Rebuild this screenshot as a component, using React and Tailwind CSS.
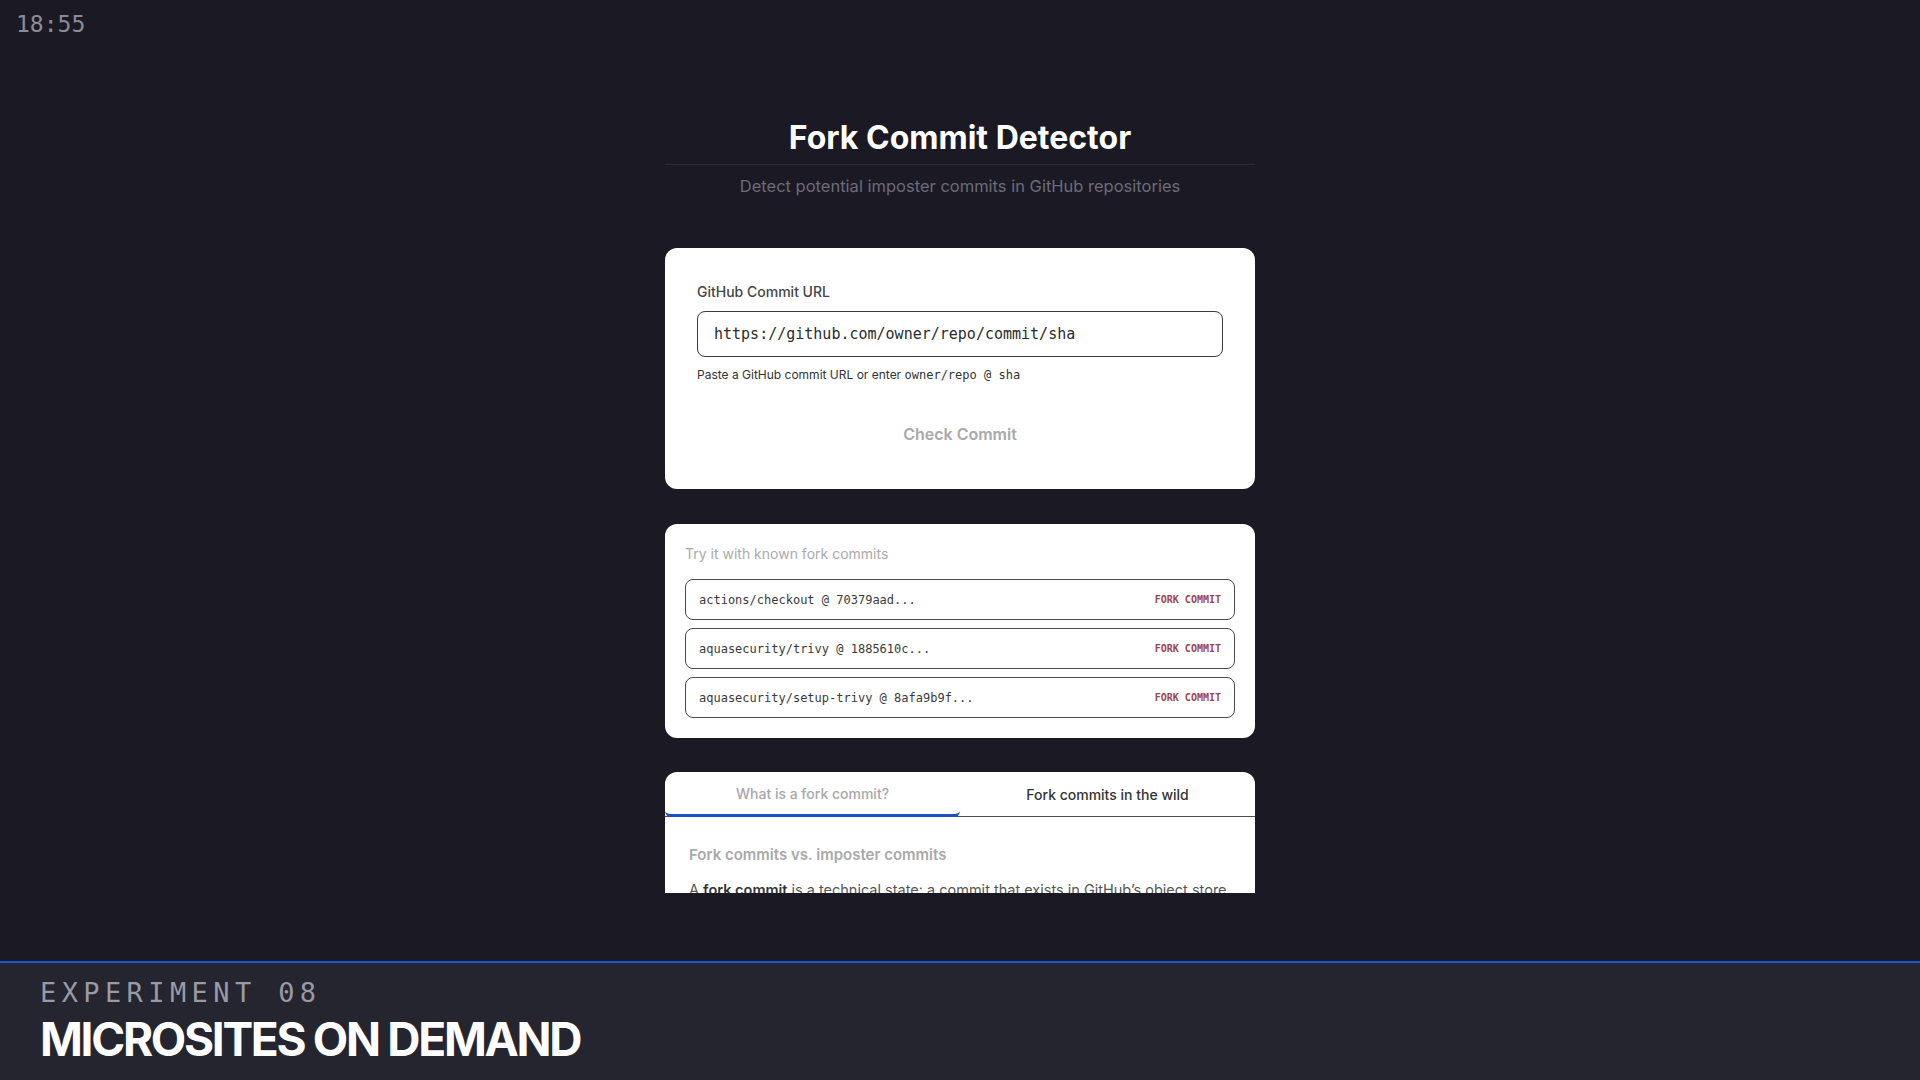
const SANS = { fontFamily: 'Inter, "Noto Sans", sans-serif' };

const samples = [
  'actions/checkout @ 70379aad...',
  'aquasecurity/trivy @ 1885610c...',
  'aquasecurity/setup-trivy @ 8afa9b9f...',
];

function SampleRow({ label }) {
  return (
    <div className="h-[41px] flex items-center justify-between px-[13px] rounded-lg border-[1.5px] border-[#4a4a4f] bg-white">
      <span className="font-['DejaVu_Sans_Mono',monospace] text-[12px] text-[#3a3a3a]">{label}</span>
      <span className="font-['DejaVu_Sans_Mono',monospace] text-[10px] font-bold text-[#9d4450]">
        FORK COMMIT
      </span>
    </div>
  );
}

export default function App() {
  return (
    <div className="relative w-[1920px] h-[1080px] bg-[#1b1a24] flex flex-col overflow-hidden" style={SANS}>
      {/* clock overlay */}
      <div className="absolute left-[16px] top-[9px] font-['DejaVu_Sans_Mono',monospace] text-[23px] leading-[30px] text-[#8b8b97]">
        18:55
      </div>

      {/* microsite viewport */}
      <div className="h-[893px] overflow-hidden flex flex-col items-center">
        <div className="w-[590px] pt-[120px]">
          <h1 className="text-[32px] leading-[36px] font-bold text-white text-center">
            Fork Commit Detector
          </h1>
          <div className="mt-[8px] h-px bg-[#2c2b37]" />
          <p className="mt-[9px] text-[16.5px] leading-[24px] text-[#6c6b78] text-center">
            Detect potential imposter commits in GitHub repositories
          </p>

          {/* input card */}
          <div className="mt-[50px] bg-white rounded-xl px-8 pt-[34px] pb-[31px]">
            <label className="block text-[14px] leading-[20px] font-medium text-[#454545] mb-[9px]">
              GitHub Commit URL
            </label>
            <div className="h-[46px] flex items-center px-[16px] rounded-lg border-[1.5px] border-[#3c3c40]">
              <span className="font-['DejaVu_Sans_Mono',monospace] text-[15px] text-[#2b2b2b]">
                https://github.com/owner/repo/commit/sha
              </span>
            </div>
            <p className="mt-[9px] text-[12px] leading-[18px] text-[#333]">
              Paste a GitHub commit URL or enter{' '}
              <span className="font-['DejaVu_Sans_Mono',monospace] text-[12px]">owner/repo @ sha</span>
            </p>
            <div className="mt-[26px] h-[48px] flex items-center justify-center text-[16px] font-semibold text-[#a9a9a9]">
              Check Commit
            </div>
          </div>

          {/* samples card */}
          <div className="mt-[35px] bg-white rounded-xl p-5">
            <p className="text-[14px] leading-[20px] text-[#ababab] mb-[15px]">Try it with known fork commits</p>
            <div className="flex flex-col gap-2">
              {samples.map(s => (
                <SampleRow key={s} label={s} />
              ))}
            </div>
          </div>

          {/* info tabs card */}
          <div className="mt-[34px] bg-white rounded-t-xl">
            <div className="flex h-[45px] border-b border-[#4d4d52]">
              <div className="flex-1 flex items-center justify-center rounded-b-md border-b-[3px] border-[#1e4fc4] -mb-px text-[14px] font-medium text-[#a8a8a8]">
                What is a fork commit?
              </div>
              <div className="flex-1 flex items-center justify-center text-[14px] font-medium text-[#333]">
                Fork commits in the wild
              </div>
            </div>
            <div className="px-6 pt-[27px] pb-6">
              <h3 className="text-[15px] leading-[22px] font-semibold text-[#a9a9a9] mb-3">
                Fork commits vs. imposter commits
              </h3>
              <p className="text-[14.5px] leading-[24px] text-[#555] whitespace-nowrap overflow-hidden">
                A <strong className="font-semibold text-[#333]">fork commit</strong> is a technical state: a commit that exists in GitHub’s object store
              </p>
            </div>
          </div>
        </div>
      </div>

      <div className="flex-1" />
      <div className="h-[2px] bg-[#1f55d1]" />

      {/* footer caption */}
      <div className="h-[117px] bg-[#25252f] px-[40px] pt-[14px]">
        <div className="font-['DejaVu_Sans_Mono',monospace] text-[27px] leading-[32px] tracking-[0.2em] text-[#9a99a6]">
          EXPERIMENT 08
        </div>
        <div className="mt-[5px] text-[46px] leading-[50px] font-bold tracking-[-0.05em] text-white">
          MICROSITES ON DEMAND
        </div>
      </div>
    </div>
  );
}
